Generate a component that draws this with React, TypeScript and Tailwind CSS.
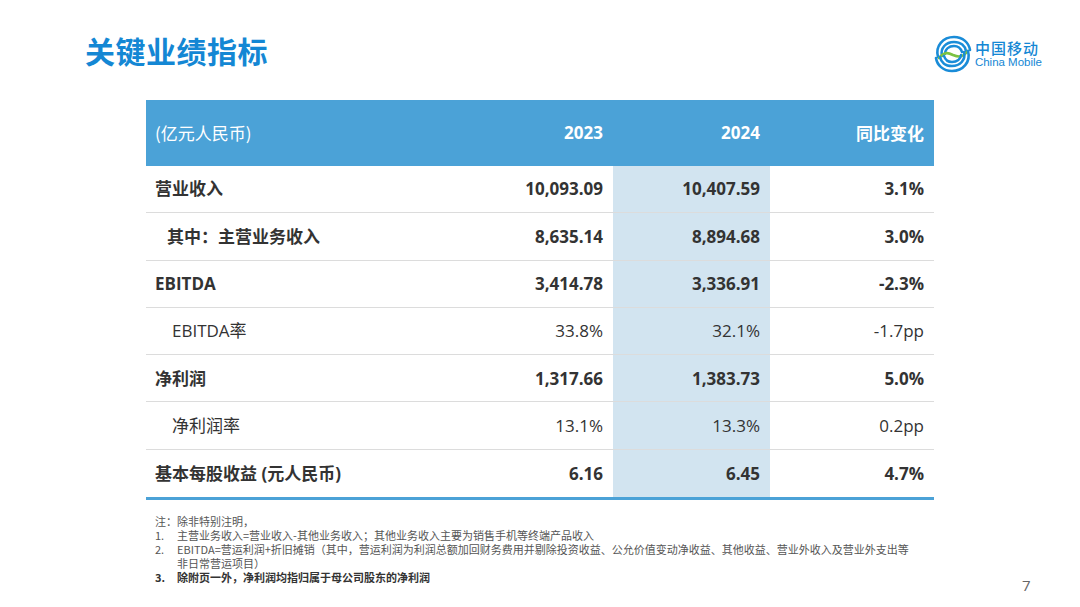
import React from "react";

const font = '"Open Sans", "Noto Sans CJK SC", sans-serif';
const cjk = '"Noto Sans CJK SC", "Noto Sans", sans-serif';

type Row = {
  label: string;
  a: string;
  b: string;
  c: string;
  bold: boolean;
  indent: string;
};

const rows: Row[] = [
  { label: "营业收入", a: "10,093.09", b: "10,407.59", c: "3.1%", bold: true, indent: "pl-[9px]" },
  { label: "其中：主营业务收入", a: "8,635.14", b: "8,894.68", c: "3.0%", bold: true, indent: "pl-[21px]" },
  { label: "EBITDA", a: "3,414.78", b: "3,336.91", c: "-2.3%", bold: true, indent: "pl-[9px]" },
  { label: "EBITDA率", a: "33.8%", b: "32.1%", c: "-1.7pp", bold: false, indent: "pl-[26px]" },
  { label: "净利润", a: "1,317.66", b: "1,383.73", c: "5.0%", bold: true, indent: "pl-[9px]" },
  { label: "净利润率", a: "13.1%", b: "13.3%", c: "0.2pp", bold: false, indent: "pl-[26px]" },
  { label: "基本每股收益 (元人民币)", a: "6.16", b: "6.45", c: "4.7%", bold: true, indent: "pl-[9px]" },
];

function Logo() {
  return (
    <svg width="40" height="40" viewBox="0 0 40 40" fill="none">
      <g strokeLinecap="round" fill="none">
        <path d="M5 23 C2 12 10 3 21 3 C30 3 36 9 37 16" stroke="#1a8cd8" strokeWidth="2.6" />
        <path d="M9 22 C7 14 13 8 21 8 C28 8 32 12 33 17" stroke="#1a8cd8" strokeWidth="2.6" />
        <path d="M12 20 C12 15 16 12 21 12 C26 12 28 15 29 18" stroke="#1a8cd8" strokeWidth="2.4" />
        <path d="M6 24 C12 17 16 19 20 21 C25 23 29 24 35 17" stroke="#7cc242" strokeWidth="2.6" />
        <path d="M35 17 C38 28 30 37 19 37 C10 37 4 31 3 24" stroke="#1a8cd8" strokeWidth="2.6" />
        <path d="M31 18 C33 26 27 32 19 32 C12 32 8 28 7 23" stroke="#1a8cd8" strokeWidth="2.6" />
        <path d="M28 21 C28 25 24 28 19 28 C14 28 12 25 11 22" stroke="#1a8cd8" strokeWidth="2.4" />
      </g>
    </svg>
  );
}

export default function App() {
  return (
    <div className="relative w-[1080px] h-[607px] bg-white overflow-hidden" style={{ fontFamily: font }}>
      {/* Header */}
      <div className="flex items-start justify-between">
        <h1
          className="ml-[85px] mt-[30px] text-[30px] leading-[40px] font-bold text-[#1487d4] tracking-[0.5px]"
          style={{ fontFamily: cjk }}
        >
          关键业绩指标
        </h1>
        <div className="mt-[34px] mr-[38px] flex items-center gap-[2px]">
          <Logo />
          <div className="flex flex-col text-[#1487d4]">
            <span className="text-[15px] leading-[17px] font-medium tracking-[1px]" style={{ fontFamily: cjk }}>
              中国移动
            </span>
            <span className="text-[11.5px] leading-[13px]" style={{ fontFamily: '"Liberation Sans", sans-serif' }}>
              China Mobile
            </span>
          </div>
        </div>
      </div>

      {/* Table */}
      <div className="ml-[146px] mt-[26px] w-[788px] text-[#333333]">
        <div className="grid grid-cols-[324px_143px_157px_164px] h-[66px] bg-[#4ba2d7] text-white items-center text-[17px]">
          <div className="pl-[9px]" style={{ fontFamily: cjk }}>(亿元人民币)</div>
          <div className="text-right pr-[10px] font-bold">2023</div>
          <div className="text-right pr-[10px] font-bold">2024</div>
          <div className="text-right pr-[10px] font-bold" style={{ fontFamily: cjk }}>同比变化</div>
        </div>
        <div className="border-b-[3px] border-[#4ba2d7]">
          {rows.map((r, i) => (
            <div
              key={i}
              className={`grid grid-cols-[324px_143px_157px_164px] h-[47.3px] items-stretch text-[17px] ${
                i < rows.length - 1 ? "border-b border-[#dcdcdc]" : ""
              } ${r.bold ? "font-bold" : "font-normal"}`}
            >
              <div className={`flex items-center ${r.indent}`} style={{ fontFamily: font }}>
                {r.label}
              </div>
              <div className="flex items-center justify-end pr-[10px]">{r.a}</div>
              <div className="flex items-center justify-end pr-[10px] bg-[#d2e4f0]">{r.b}</div>
              <div className="flex items-center justify-end pr-[10px]">{r.c}</div>
            </div>
          ))}
        </div>
      </div>

      {/* Notes */}
      <div className="ml-[155px] mt-[14px] text-[11px] leading-[14px] text-[#555555]" style={{ fontFamily: cjk }}>
        <div>注：除非特别注明，</div>
        <div className="flex">
          <span className="w-[22px] shrink-0">1.</span>
          <span>主营业务收入=营业收入-其他业务收入；其他业务收入主要为销售手机等终端产品收入</span>
        </div>
        <div className="flex">
          <span className="w-[22px] shrink-0">2.</span>
          <span className="w-[738px]">
            EBITDA=营运利润+折旧摊销（其中，营运利润为利润总额加回财务费用并剔除投资收益、公允价值变动净收益、其他收益、营业外收入及营业外支出等非日常营运项目）
          </span>
        </div>
        <div className="flex font-bold text-[#333333]">
          <span className="w-[22px] shrink-0">3.</span>
          <span>除附页一外，净利润均指归属于母公司股东的净利润</span>
        </div>
      </div>

      <div className="absolute left-[1022px] top-[574px] text-[15px] text-[#666666]">7</div>
    </div>
  );
}
